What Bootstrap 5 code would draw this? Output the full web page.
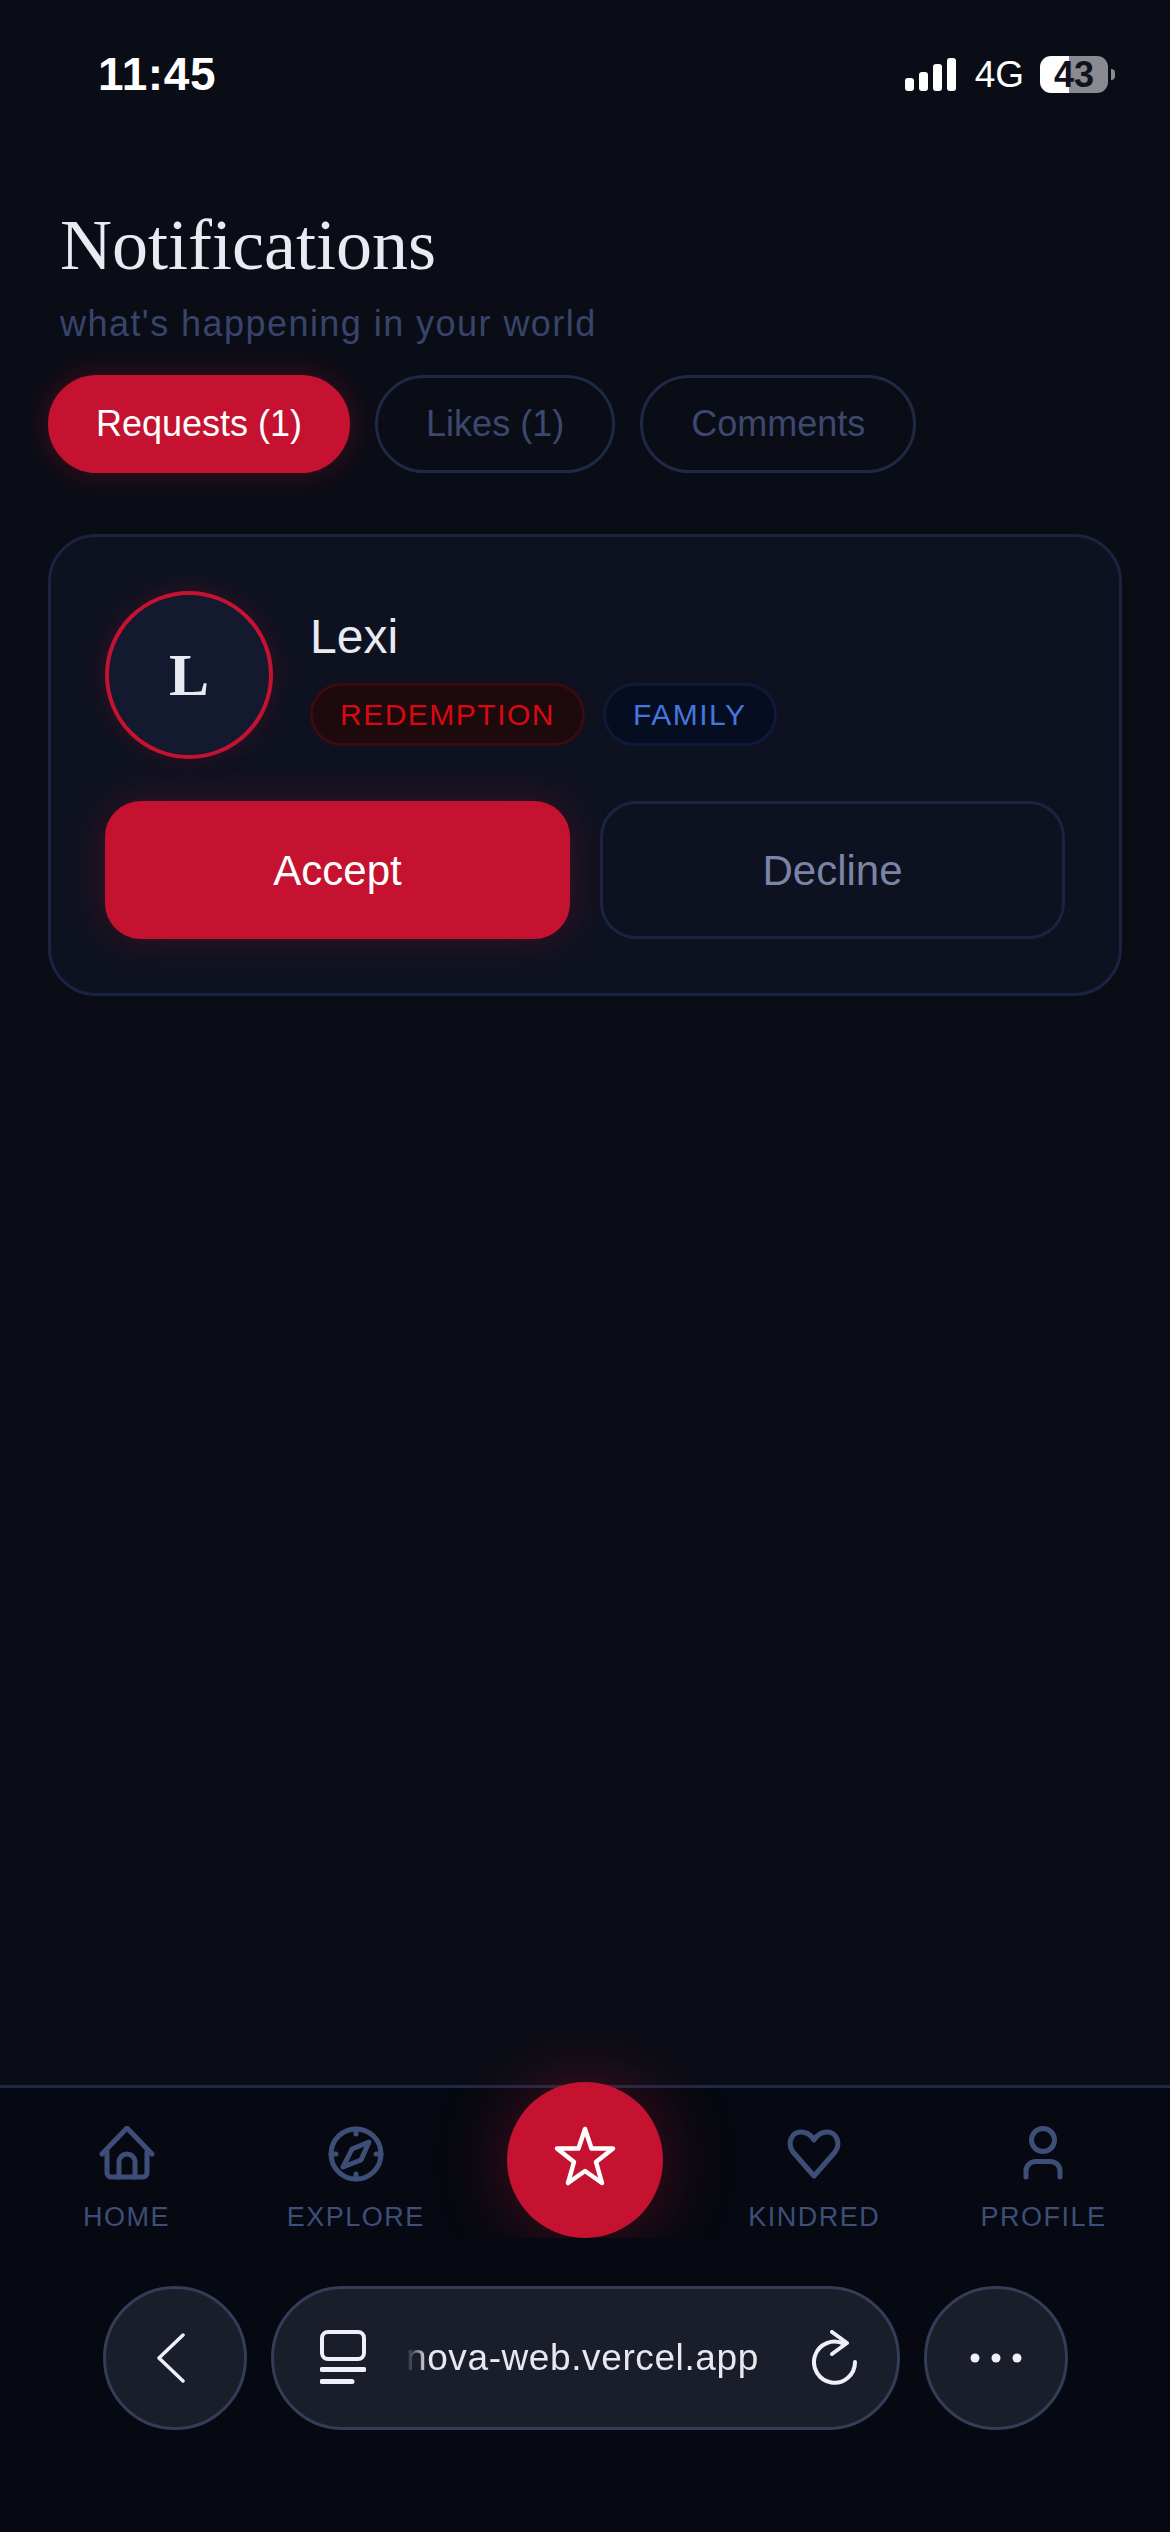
<!DOCTYPE html>
<html lang="en">
<head>
    <meta charset="UTF-8">
    <meta name="viewport" content="width=device-width, initial-scale=1.0">
    <title>Notifications</title>
    <link href="https://cdn.jsdelivr.net/npm/bootstrap@5.3.0/dist/css/bootstrap.min.css" rel="stylesheet">
    <style>
        body { background: #0a0d16; font-family: "Liberation Sans", Arial, sans-serif; height: 2532px; width: 1170px; overflow: hidden; }
        .app-shell { height: 2532px; }

        /* status bar */
        .status-row { height: 148px; padding: 0 55px 0 98px; color: #fff; }
        .clock { font-size: 46px; font-weight: 700; letter-spacing: .6px; line-height: 1; }
        .net-type { font-size: 37px; line-height: 1; margin: 0 16px 0 19px; }
        .signal-bars { height: 34px; gap: 5px; margin-left: 2px; }
        .signal-bars span { width: 9px; background: #fff; border-radius: 3px; }
        .battery-box { width: 68px; height: 37px; border-radius: 11px; font-size: 36px; font-weight: 700; color: #10131d; line-height: 37px; text-align: center; background: linear-gradient(90deg, #fff 43%, #8a8b90 43%); }
        .battery-tip { width: 4px; height: 11px; margin-left: 3px; background: #8a8b90; border-radius: 0 4px 4px 0; }

        /* header */
        .page-head { padding: 57px 48px 0 60px; }
        .page-title { font-family: "Liberation Serif", "Times New Roman", serif; font-size: 72px; line-height: 80px; font-weight: 400; color: #e9ebf2; margin: 0; }
        .page-sub { font-size: 36px; line-height: 44px; color: #38446a; letter-spacing: 1.45px; margin: 17px 0 0; }

        /* tabs */
        .tab-row { padding: 29px 48px 0; gap: 25px; }
        .tab-pill { height: 98px; padding: 0 48px; border-radius: 49px; font-size: 36px; border: 3px solid #1f2945; color: #3d486e; background: transparent; display: flex; align-items: center; }
        .tab-pill.is-on { background: #c41230; border-color: #c41230; color: #fff; padding: 0 45px; box-shadow: 0 0 30px rgba(196,18,48,.3); }

        /* request card */
        .req-card { margin: 61px 48px 0 48px; background: #0e1220; border: 3px solid #1b2340; border-radius: 48px; padding: 54px; }
        .avatar-ring { width: 168px; height: 168px; background: #131a30; border: 4px solid #c41230; font-family: "Liberation Serif", "Times New Roman", serif; font-weight: 700; font-size: 60px; color: #e9ebf2; box-shadow: 0 0 24px rgba(196,18,48,.2); flex: none; }
        .person-info { margin-left: 37px; }
        .person-name { font-size: 48px; line-height: 56px; color: #e9ebf2; margin-top: 18px; }
        .tag-row { gap: 18px; margin-top: 18px; }
        .tag-pill { height: 63px; padding: 0 27px; border-radius: 32px; font-size: 30px; letter-spacing: 1.5px; display: flex; align-items: center; border: 3px solid; }
        .tag-red { background: #1c0a0c; border-color: #3d0a10; color: #d90813; }
        .tag-blue { background: #070d20; border-color: #0f1a3a; color: #4477dd; }
        .act-row { gap: 30px; margin-top: 42px; }
        .act-btn { height: 138px; flex: 1 1 0; border-radius: 36px; font-size: 42px; border: 3px solid #1b2340; color: #7a84a6; background: transparent; }
        .act-btn.is-accept { background: #c41230; border-color: #c41230; color: #fff; box-shadow: 0 0 40px rgba(196,18,48,.25); }

        /* bottom nav */
        .bottom-area { background: #060911; border-top: 3px solid #1f2945; height: 447px; }
        .nav-grid { display: grid; grid-template-columns: repeat(5, 1fr); padding: 0 12px; height: 196px; }
        .nav-cell { color: #3d4f78; font-size: 27px; letter-spacing: 1.5px; line-height: 1; padding-top: 38px; }
        .nav-cell svg { display: block; margin-bottom: 22px; }
        .nav-star { width: 156px; height: 156px; margin-top: -6px; padding-bottom: 6px; background: #c41230; box-shadow: 0 0 70px rgba(196,18,48,.35); clip-path: inset(-120px -120px 0 -120px); }

        /* browser bar */
        .browser-row { padding: 2px 102px 0 103px; gap: 24px; }
        .round-btn { width: 144px; height: 144px; background: #1a1e2a; border: 3px solid #333d57; flex: none; }
        .url-pill { height: 144px; flex: 1 1 0; background: #1a1e2a; border: 3px solid #333d57; border-radius: 72px; padding: 0 39px 0 46px; }
        .url-text { font-size: 37px; color: #e8e9ef; letter-spacing: .6px; margin-left: 40px; -webkit-mask-image: linear-gradient(90deg, transparent 0, #000 22px); mask-image: linear-gradient(90deg, transparent 0, #000 22px); }
    </style>
</head>
<body>
<div class="app-shell d-flex flex-column">

    <div class="status-row d-flex align-items-center justify-content-between">
        <div class="clock">11:45</div>
        <div class="d-flex align-items-center">
            <div class="signal-bars d-flex align-items-end">
                <span style="height: 13px"></span>
                <span style="height: 19px"></span>
                <span style="height: 27px"></span>
                <span style="height: 33px"></span>
            </div>
            <div class="net-type">4G</div>
            <div class="battery-box">43</div>
            <div class="battery-tip"></div>
        </div>
    </div>

    <div class="page-head">
        <h1 class="page-title">Notifications</h1>
        <p class="page-sub">what's happening in your world</p>
    </div>

    <div class="tab-row d-flex">
        <button class="btn tab-pill is-on">Requests (1)</button>
        <button class="btn tab-pill">Likes (1)</button>
        <button class="btn tab-pill">Comments</button>
    </div>

    <div class="card req-card">
        <div class="d-flex">
            <div class="avatar-ring rounded-circle d-flex align-items-center justify-content-center">L</div>
            <div class="person-info">
                <div class="person-name">Lexi</div>
                <div class="tag-row d-flex">
                    <span class="tag-pill tag-red">REDEMPTION</span>
                    <span class="tag-pill tag-blue">FAMILY</span>
                </div>
            </div>
        </div>
        <div class="act-row d-flex">
            <button class="btn act-btn is-accept">Accept</button>
            <button class="btn act-btn">Decline</button>
        </div>
    </div>

    <div class="mt-auto bottom-area">
        <nav class="nav-grid">
            <a class="nav-cell d-flex flex-column align-items-center text-decoration-none">
                <svg width="56" height="56" viewBox="0 0 56 56" fill="none" stroke="currentColor" stroke-width="5" stroke-linecap="round" stroke-linejoin="round">
                    <path d="M3 28 28 2l25 26"/>
                    <path d="M8 26v21a4 4 0 0 0 4 4h32a4 4 0 0 0 4-4V26"/>
                    <path d="M20 51V36a8 8 0 0 1 16 0v15"/>
                </svg>
                HOME
            </a>
            <a class="nav-cell d-flex flex-column align-items-center text-decoration-none">
                <svg width="56" height="56" viewBox="0 0 56 56" fill="none" stroke="currentColor" stroke-width="5" stroke-linecap="round" stroke-linejoin="round">
                    <circle cx="28" cy="28" r="25"/>
                    <path d="M28 3v5M28 48v5M3 28h5M48 28h5"/>
                    <path d="M41 16 33 34 15 41l9-18z"/>
                </svg>
                EXPLORE
            </a>
            <div class="d-flex justify-content-center">
                <div class="nav-star rounded-circle d-flex align-items-center justify-content-center">
                    <svg width="64" height="62" viewBox="0 0 64 62" fill="none" stroke="#fff" stroke-width="4.500" stroke-linejoin="round" stroke-linecap="round">
                        <path d="M32 3l6.500 19.500H60L43 36l6 21-17-12-17 12 6-21L4 22.500H25.500z"/>
                    </svg>
                </div>
            </div>
            <a class="nav-cell d-flex flex-column align-items-center text-decoration-none">
                <svg width="56" height="56" viewBox="0 0 56 56" fill="none" stroke="currentColor" stroke-width="5" stroke-linecap="round" stroke-linejoin="round">
                    <path d="M28 50 7 26C1 18 5 6 15 6c6 0 10 3 13 8 3-5 7-8 13-8 10 0 14 12 8 20z"/>
                </svg>
                KINDRED
            </a>
            <a class="nav-cell d-flex flex-column align-items-center text-decoration-none">
                <svg width="56" height="56" viewBox="0 0 56 56" fill="none" stroke="currentColor" stroke-width="5" stroke-linecap="round" stroke-linejoin="round">
                    <circle cx="28" cy="14" r="11.500"/>
                    <path d="M11 51v-6a9.500 9.500 0 0 1 9.500-9.500h15A9.500 9.500 0 0 1 45 45v6"/>
                </svg>
                PROFILE
            </a>
        </nav>

        <div class="browser-row d-flex">
            <div class="round-btn rounded-circle d-flex align-items-center justify-content-center pe-2">
                <svg width="30" height="50" viewBox="0 0 30 50" fill="none" stroke="#eef0fa" stroke-width="3.500" stroke-linecap="round" stroke-linejoin="round">
                    <path d="M27 2 3 25l24 23"/>
                </svg>
            </div>
            <div class="url-pill d-flex align-items-center">
                <svg width="46" height="56" viewBox="0 0 46 56" fill="none" stroke="#eef0fa" stroke-width="4" stroke-linecap="round">
                    <rect x="2" y="2" width="42" height="27" rx="6"/>
                    <path d="M2 39.500h42M2 51.500h30" stroke-width="5"/>
                </svg>
                <div class="url-text">nova-web.vercel.app</div>
                <svg class="ms-auto" width="46" height="56" viewBox="0 0 46 56" fill="none" stroke="#eef0fa" stroke-width="4" stroke-linecap="round" stroke-linejoin="round">
                    <path d="M32 14A20.500 20.500 0 1 0 43 32"/>
                    <path d="M20 2l15 11-15 11"/>
                </svg>
            </div>
            <div class="round-btn rounded-circle d-flex align-items-center justify-content-center">
                <svg width="52" height="10" viewBox="0 0 52 10" fill="#eef0fa">
                    <circle cx="5" cy="5" r="4.500"/>
                    <circle cx="26" cy="5" r="4.500"/>
                    <circle cx="47" cy="5" r="4.500"/>
                </svg>
            </div>
        </div>
    </div>
</div>
<script src="https://cdn.jsdelivr.net/npm/bootstrap@5.3.0/dist/js/bootstrap.bundle.min.js"></script>
</body>
</html>
